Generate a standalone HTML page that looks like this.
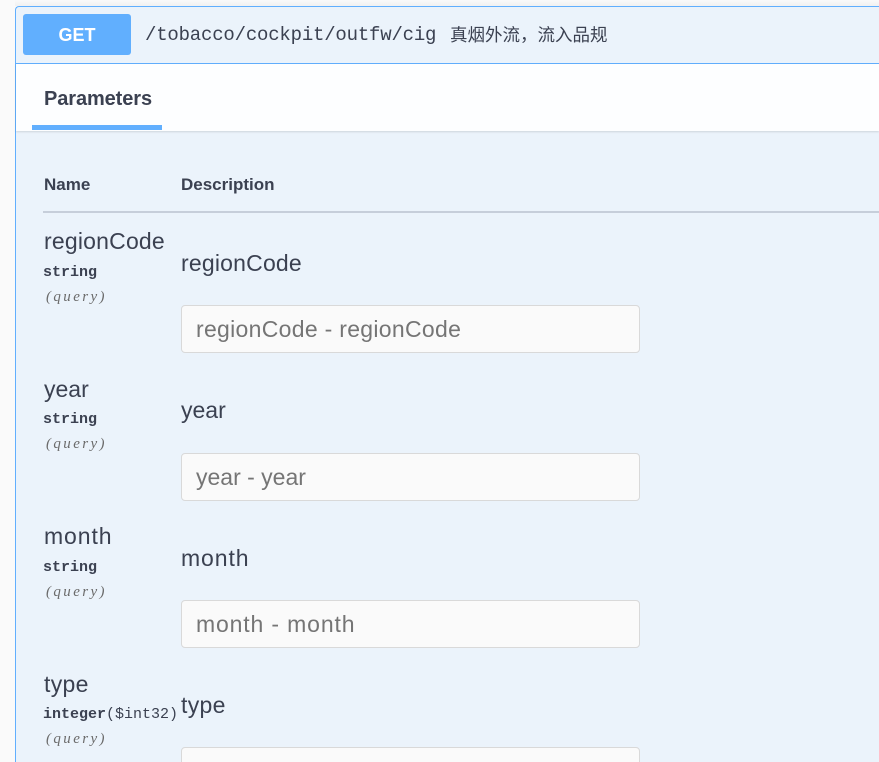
<!DOCTYPE html>
<html><head><meta charset="utf-8">
<style>
html,body{margin:0;padding:0;width:879px;height:762px;overflow:hidden;background:#fafafa}
#w{position:relative;width:879px;height:762px;overflow:hidden}
.a{position:absolute;white-space:nowrap}
.s{font-family:"Liberation Sans","Noto Sans CJK SC",sans-serif;color:#3b4151}
.m{font-family:"Liberation Mono",monospace;color:#3b4151;font-weight:bold;font-size:15px;line-height:16px}
.q{font-family:"Liberation Serif",serif;font-style:italic;color:#6b6b6b;font-size:15px;line-height:16px;letter-spacing:2.4px;left:46px}
.n{font-size:23px;line-height:30px}
.i{left:181px;width:457px;height:46px;border:1px solid #d9d9d9;border-radius:4px;background:#fafafa;box-sizing:content-box}
.p{left:196px;font-size:23px;line-height:30px;color:#757575}
</style></head><body><div id="w">
<div class="a" style="left:15px;top:0;width:864px;height:6px;background:linear-gradient(#fafafa,#f1f1f1)"></div>
<div class="a" style="left:15px;top:6px;width:864px;height:770px;box-sizing:border-box;border:1px solid #61affe;border-right:0;border-radius:4px 0 0 4px;background:#ebf3fb"></div>
<div class="a" style="left:16px;top:63px;width:863px;height:1px;background:#61affe"></div>
<div class="a" style="left:23px;top:14px;width:108px;height:41px;background:#61affe;border-radius:3px;color:#fff;font:bold 18px/42px 'Liberation Sans',sans-serif;text-align:center">GET</div>
<div class="a" style="left:145px;top:23px;font:19px/24px 'Liberation Mono',monospace;color:#3b4151;letter-spacing:-.2px">/tobacco/cockpit/outfw/cig</div>
<div class="a" style="left:450px;top:24px;font:400 17.5px/22px 'Noto Sans CJK SC',sans-serif;color:#3b4151">真烟外流，流入品规</div>
<div class="a" style="left:16px;top:64px;width:863px;height:67px;background:#fdfeff;box-shadow:0 1px 2px rgba(0,0,0,.13)"></div>
<div class="a s" style="left:44px;top:87px;font-size:20px;line-height:24px;font-weight:bold;letter-spacing:-.1px">Parameters</div>
<div class="a" style="left:32px;top:125px;width:130px;height:5px;background:#61affe"></div>
<div class="a s" style="left:44px;top:175px;font-size:17px;line-height:20px;font-weight:bold">Name</div>
<div class="a s" style="left:181px;top:175px;font-size:17px;line-height:20px;font-weight:bold">Description</div>
<div class="a" style="left:43px;top:211px;width:836px;height:2px;background:#c6ceda"></div>

<div class="a s n" style="left:44px;top:226px;letter-spacing:.2px">regionCode</div>
<div class="a m" style="left:43px;top:265px">string</div>
<div class="a q" style="top:289px">(query)</div>
<div class="a s n" style="left:181px;top:248px;letter-spacing:.2px">regionCode</div>
<div class="a i" style="top:305px"></div>
<div class="a p s" style="top:314px;color:#757575;letter-spacing:.3px">regionCode - regionCode</div>

<div class="a s n" style="left:44px;top:374px">year</div>
<div class="a m" style="left:43px;top:412px">string</div>
<div class="a q" style="top:436px">(query)</div>
<div class="a s n" style="left:181px;top:395px">year</div>
<div class="a i" style="top:453px"></div>
<div class="a p s" style="top:462px;color:#757575">year - year</div>

<div class="a s n" style="left:44px;top:521px;letter-spacing:.9px">month</div>
<div class="a m" style="left:43px;top:560px">string</div>
<div class="a q" style="top:584px">(query)</div>
<div class="a s n" style="left:181px;top:543px;letter-spacing:.9px">month</div>
<div class="a i" style="top:600px"></div>
<div class="a p s" style="top:609px;color:#757575;letter-spacing:.85px">month - month</div>

<div class="a s n" style="left:44px;top:669px;letter-spacing:.3px">type</div>
<div class="a m" style="left:43px;top:707px">integer<span style="font-weight:normal">($int32)</span></div>
<div class="a q" style="top:731px">(query)</div>
<div class="a s n" style="left:181px;top:690px;letter-spacing:.3px">type</div>
<div class="a i" style="top:747px"></div>
</div></body></html>
